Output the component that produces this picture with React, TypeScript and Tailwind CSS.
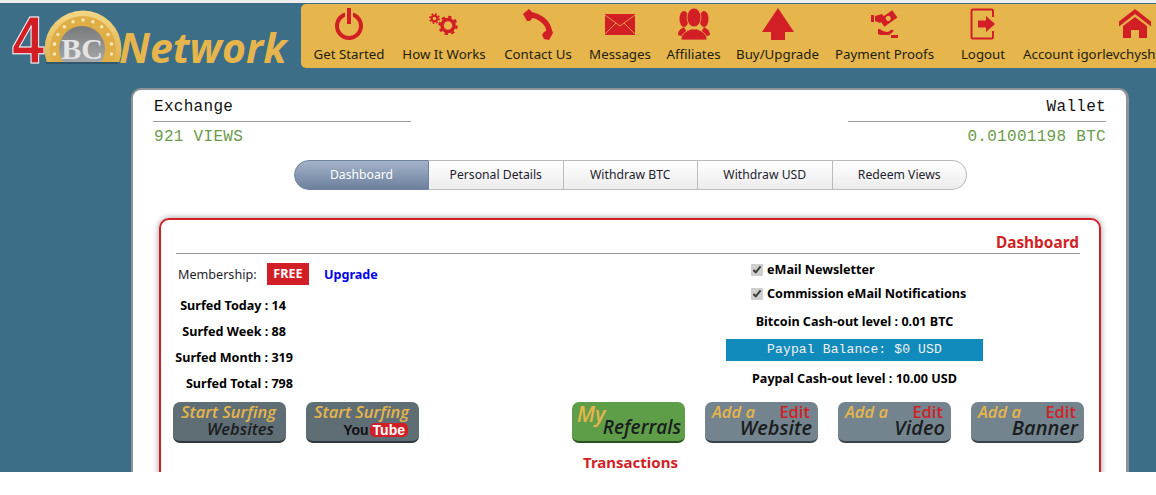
import { ImHome, ImSwitch } from "react-icons/im";
import type { ReactNode } from "react";

const sans = "font-['Noto_Sans','Open_Sans',sans-serif]";
const red = "#d21f26";

function Gears() {
  return (
    <svg width="30" height="22" viewBox="0 0 30 22">
      <circle cx="19" cy="12.500" r="6" fill="none" stroke={red} strokeWidth="3.500" />
      <circle cx="19" cy="12.500" r="8.500" fill="none" stroke={red} strokeWidth="2.500" strokeDasharray="3.300 3.370" />
      <circle cx="5.500" cy="5.500" r="2.800" fill="none" stroke={red} strokeWidth="2" />
      <circle cx="5.500" cy="5.500" r="4.500" fill="none" stroke={red} strokeWidth="1.800" strokeDasharray="1.800 1.730" />
    </svg>
  );
}

function Handset() {
  return (
    <svg width="30" height="31" viewBox="0 0 30 31">
      <path d="M5 6C15 5 27 14 26 24" fill="none" stroke={red} strokeWidth="5.500" />
      <path d="M0 5 6 0 12 6 7 12 4 12Z" fill={red} />
      <path d="M21 23 28 19 30 24 26 31 21 30 19 26Z" fill={red} />
    </svg>
  );
}

function Envelope() {
  return (
    <svg width="30" height="21" viewBox="0 0 30 21">
      <rect width="30" height="21" fill={red} />
      <path d="M0 1 15 12 30 1M0 20 11 9M30 20 19 9" stroke="#e6b54b" strokeWidth="0.800" fill="none" />
    </svg>
  );
}

function People() {
  return (
    <svg width="32" height="32" viewBox="0 0 32 32" fill={red}>
      <ellipse cx="6" cy="11" rx="4.500" ry="8" />
      <path d="M0 27c0-5 3-6 6-8l5 9H3Z" />
      <ellipse cx="26" cy="11" rx="4.500" ry="8" />
      <path d="M32 27c0-5-3-6-6-8l-5 9h8Z" />
      <ellipse cx="16" cy="9.500" rx="7" ry="9.500" stroke="#e6b54b" strokeWidth="0.800" />
      <path d="M3 32c0-7 6-9 10-11h6c4 2 10 4 10 11Z" stroke="#e6b54b" strokeWidth="0.800" />
    </svg>
  );
}

function UpArrow() {
  return (
    <svg width="32" height="32" viewBox="0 0 32 32">
      <path d="M16 0 32 24H23V32H9V24H0Z" fill={red} />
    </svg>
  );
}

function MoneyHand() {
  return (
    <svg width="28" height="28" viewBox="0 0 28 28" fill={red}>
      <path d="M0 5h3v7H0Z" />
      <path d="M4 6 11 4 14 8 9 13 4 11Z" />
      <g transform="rotate(-35 17 8)">
        <rect x="9" y="4" width="16" height="9" />
        <circle cx="17" cy="8.500" r="2.500" fill="#e6b54b" />
      </g>
      <path d="M7 19h2c2 2 5 3 8 3l3-2c2-1 3 1 2 2l-4 3H9l-2-1Z" />
      <path d="M20 25h7v3h-7Z" />
    </svg>
  );
}

function LogoutIcon() {
  return (
    <svg width="26" height="32" viewBox="0 0 26 32">
      <path d="M23 9V3a1.500 1.500 0 0 0-1.500-1.500H3A1.500 1.500 0 0 0 1.500 3v26A1.500 1.500 0 0 0 3 30.500h18.500A1.500 1.500 0 0 0 23 29v-6" fill="none" stroke={red} strokeWidth="2" />
      <path d="M8 12.500h8V8l9 8-9 8v-4.500H8Z" fill={red} />
    </svg>
  );
}

function Coin() {
  const stars = [-170, -150, -130, -110, -90, -70, -50, -30, -10, 10, 170, 190];
  return (
    <svg width="78" height="56" viewBox="0 0 78 56" className="block">
      <defs>
        <linearGradient id="gold" x1="0" y1="0" x2="0" y2="1">
          <stop offset="0" stopColor="#f4d785" />
          <stop offset="1" stopColor="#d79f34" />
        </linearGradient>
        <linearGradient id="silver" x1="0" y1="0" x2="0" y2="1">
          <stop offset="0" stopColor="#77797b" />
          <stop offset="1" stopColor="#b4b5b6" />
        </linearGradient>
        <clipPath id="cut">
          <rect width="78" height="52" />
        </clipPath>
      </defs>
      <rect x="2" y="52" width="72" height="2" fill="#24404f" opacity="0.5" />
      <g clipPath="url(#cut)">
        <circle cx="39" cy="39" r="38.500" fill="url(#gold)" />
        <circle cx="39" cy="39" r="33" fill="#dfae47" />
        {stars.map((a) => (
          <circle
            key={a}
            cx={39 + 29 * Math.cos((a * Math.PI) / 180)}
            cy={39 + 29 * Math.sin((a * Math.PI) / 180)}
            r="1.700"
            fill="#f8e9b8"
          />
        ))}
        <circle cx="38" cy="39" r="23" fill="url(#silver)" />
        <text x="38" y="49" textAnchor="middle" fontFamily="Liberation Serif" fontWeight="700" fontSize="30" fill="#e4e4e4">
          BC
        </text>
      </g>
    </svg>
  );
}

const navItems: { label: string; width: string; icon: ReactNode }[] = [
  { label: "Get Started", width: "w-[70px]", icon: <ImSwitch size={32} color={red} /> },
  { label: "How It Works", width: "w-[84px]", icon: <Gears /> },
  { label: "Contact Us", width: "w-[68px]", icon: <Handset /> },
  { label: "Messages", width: "w-[60px]", icon: <Envelope /> },
  { label: "Affiliates", width: "w-[51px]", icon: <People /> },
  { label: "Buy/Upgrade", width: "w-[81px]", icon: <UpArrow /> },
  { label: "Payment Proofs", width: "w-[97px]", icon: <MoneyHand /> },
  { label: "Logout", width: "w-[44px] ml-[10px]", icon: <LogoutIcon /> },
  { label: "Account igorlevchyshyn", width: "w-[224px]", icon: <ImHome size={32} color={red} /> },
];

const tabs = ["Personal Details", "Withdraw BTC", "Withdraw USD", "Redeem Views"];

function ImageButton({ className, children }: { className: string; children: ReactNode }) {
  return (
    <div className={`relative h-[41px] w-[113px] rounded-[7px] border-b-2 font-['Open_Sans',sans-serif] text-[16.5px] font-semibold italic leading-none ${className}`}>
      {children}
    </div>
  );
}

function AddButton({ label }: { label: string }) {
  return (
    <ImageButton className="border-[#38444c] bg-[#73848e]">
      <span className="absolute left-[7px] top-[2px] text-[#e6b54b]">Add a</span>
      <span className="absolute right-[8px] top-[2px] not-italic text-[#d21f26]">Edit</span>
      <span className="absolute right-[6px] top-[16px] text-[20px] text-[#1b1d20]">{label}</span>
    </ImageButton>
  );
}

export default function App() {
  return (
    <div className="h-[495px] w-[1156px] overflow-hidden bg-white">
      <div className={`h-[472px] overflow-hidden border-t-[3px] border-[#eeeeee] bg-[#3c6e88] text-[12.6px] text-black ${sans}`}>
        <header className="flex h-[66px] items-start pt-px">
          <div className="h-[62px] w-[301px] shrink-0">
            <div className="flex h-[59px] items-end pl-[12px]">
              <span className="mb-[-2px] w-[32px] origin-left scale-x-[0.88] font-['Liberation_Sans',sans-serif] text-[66px] font-bold leading-[50px] text-[#d21f26] [-webkit-text-stroke:1px_#ffffff]">4</span>
              <div className="mb-[-3px] shrink-0">
                <Coin />
              </div>
              <span className="mb-[-4px] -ml-[3px] font-['Open_Sans',sans-serif] text-[41px] font-bold italic leading-[40px] text-[#e6b54b]">Network</span>
            </div>
          </div>
          <nav className="flex h-[64px] min-w-0 flex-1 gap-[18px] overflow-hidden rounded-l-[5px] bg-[#e6b54b] pl-[13px]">
            {navItems.map((item) => (
              <div key={item.label} className={`flex shrink-0 flex-col items-center ${item.width}`}>
                <div className="flex h-[40px] items-center justify-center">{item.icon}</div>
                <span className={`whitespace-nowrap text-[13.3px] leading-[20px] text-[#1d1d12] ${item.width === "w-[224px]" ? "self-start" : ""}`}>{item.label}</span>
              </div>
            ))}
          </nav>
        </header>

        <main className="ml-[131px] mr-[27px] mt-[19px] h-[500px] rounded-[10px] border-2 border-r-[3px] border-[#8d9396] bg-white">
          <div className="flex justify-between px-[20px] pt-[7px] font-['Liberation_Mono',monospace] text-[16px] leading-[20px]">
            <div className="w-[258px]">
              <div className="border-b border-[#9a9a9a] pb-[4px] pl-px tracking-[0.3px] text-[#111111]">Exchange</div>
              <div className="pl-px pt-[5px] tracking-[0.3px] text-[#6c9b4c]">921 VIEWS</div>
            </div>
            <div className="w-[258px] text-right">
              <div className="border-b border-[#9a9a9a] pb-[4px] tracking-[0.3px] text-[#111111]">Wallet</div>
              <div className="pt-[5px] tracking-[0.3px] text-[#6c9b4c]">0.01001198 BTC</div>
            </div>
          </div>

          <div className="mt-[13px] flex h-[30px] pl-[161px] text-[12.2px]">
            <div className="flex w-[135px] items-center justify-center rounded-l-[15px] border border-[#6f839d] bg-gradient-to-b from-[#a5b3c9] to-[#6c809d] pt-px text-white">
              Dashboard
            </div>
            {tabs.map((tab, i) => (
              <div
                key={tab}
                className={`flex w-[134.5px] items-center justify-center border border-l-0 border-[#bbbbbb] bg-gradient-to-b from-white to-[#ececec] pt-px text-[#1d1d2d] ${i === 3 ? "rounded-r-[15px]" : ""}`}
              >
                {tab}
              </div>
            ))}
          </div>

          <section className="ml-[26px] mr-[25px] mt-[28px] h-[300px] rounded-[10px] border-2 border-[#d21f26] pl-[15px] pr-[19px] shadow-[0_0_6px_rgba(0,0,0,0.4)]">
            <h2 className="mt-[12px] border-b border-[#999999] pr-px text-right text-[15.4px] font-bold leading-[21px] text-[#d21f26]">Dashboard</h2>

            <div className="flex h-[148px] justify-between">
              <div className="w-[220px]">
                <div className="mt-[9px] flex h-[22px] items-center pl-[2px]">
                  <span className="w-[89px] whitespace-nowrap pt-[2px] text-[#1d1d2d]">Membership:</span>
                  <span className="flex h-[22px] w-[42px] items-center justify-center bg-[#d21f26] font-bold text-white">FREE</span>
                  <span className="ml-[15px] pt-[2px] font-bold text-[#0000ee]">Upgrade</span>
                </div>
                <div className="mt-[12px] flex w-[117px] flex-col items-end gap-[8px] whitespace-nowrap font-bold leading-[18px]">
                  <span className="pr-[7px]">Surfed Today : 14</span>
                  <span className="pr-[7px]">Surfed Week : 88</span>
                  <span>Surfed Month : 319</span>
                  <span>Surfed Total : 798</span>
                </div>
              </div>

              <div className="mr-[97px] flex w-[257px] flex-col items-center font-bold leading-[18px]">
                <label className="mt-[7px] flex w-full items-center gap-[4px] pl-[25px]">
                  <input type="checkbox" defaultChecked className="h-[12px] w-[12px] accent-[#cfcfcf]" />
                  eMail Newsletter
                </label>
                <label className="mt-[6px] flex w-full items-center gap-[4px] pl-[25px]">
                  <input type="checkbox" defaultChecked className="h-[12px] w-[12px] accent-[#cfcfcf]" />
                  Commission eMail Notifications
                </label>
                <div className="mt-[10px]">Bitcoin Cash-out level : 0.01 BTC</div>
                <div className="mt-[8px] flex h-[22px] w-full items-center justify-center bg-[#118abc] font-['Liberation_Mono',monospace] text-[13px] font-normal tracking-[0.15px] text-[#f2f2f2]">
                  Paypal Balance: $0 USD
                </div>
                <div className="mt-[9px]">Paypal Cash-out level : 10.00 USD</div>
              </div>
            </div>

            <div className="-ml-[3px] -mr-[4px] flex justify-between">
              <div className="flex gap-[20px]">
                <ImageButton className="border-[#2e383d] bg-[#5f6e75]">
                  <span className="absolute left-[8px] top-[2px] text-[#e6b54b]">Start Surfing</span>
                  <span className="absolute right-[12px] top-[19px] text-[#1b1d20]">Websites</span>
                </ImageButton>
                <ImageButton className="border-[#2e383d] bg-[#5f6e75]">
                  <span className="absolute left-[8px] top-[2px] text-[#e6b54b]">Start Surfing</span>
                  <span className="absolute right-[11px] top-[21px] flex items-center font-['Liberation_Sans',sans-serif] text-[14px] font-bold not-italic text-[#111111]">
                    You
                    <span className="ml-px rounded-[5px] bg-[#d21f26] px-[3px] text-white">Tube</span>
                  </span>
                </ImageButton>
              </div>
              <div className="flex gap-[20px]">
                <ImageButton className="border-[#2c4f22] bg-[#5e9e49]">
                  <span className="absolute left-[5px] top-[2px] text-[21px] text-[#e6b54b]">My</span>
                  <span className="absolute right-[4px] top-[16px] text-[19px] text-[#1b1d20]">Referrals</span>
                </ImageButton>
                <AddButton label="Website" />
                <AddButton label="Video" />
                <AddButton label="Banner" />
              </div>
            </div>

            <div className="ml-[407px] mt-[9px] text-[15px] font-bold leading-[20px] text-[#d21f26]">Transactions</div>
          </section>
        </main>
      </div>
    </div>
  );
}
